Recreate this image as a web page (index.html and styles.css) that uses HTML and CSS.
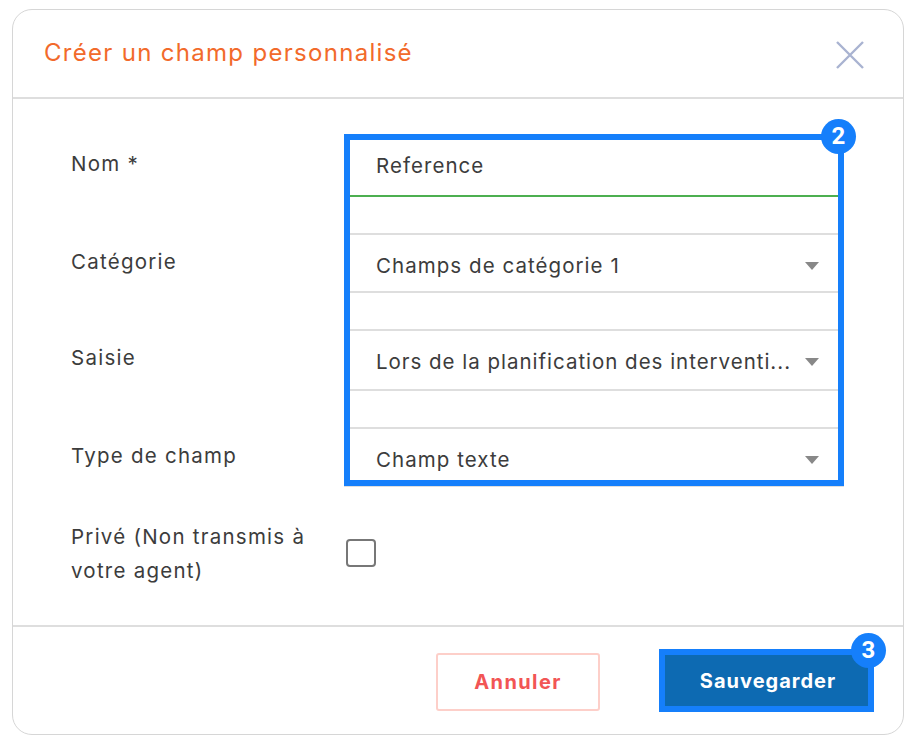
FILE: index.html
```html
<!DOCTYPE html>
<html lang="fr">
<head>
    <meta charset="UTF-8">
    <meta name="viewport" content="width=device-width, initial-scale=1.0">
    <title>Créer un champ personnalisé</title>
    <link rel="stylesheet" href="styles.css">
</head>
<body>
    <div class="modal">
        <div class="modal-header">
            <h1 class="modal-title">Créer un champ personnalisé</h1>
            <svg class="close-icon" viewBox="0 0 28 28" aria-label="Fermer">
                <path d="M1 1 L27 27 M27 1 L1 27"></path>
            </svg>
        </div>
        <div class="modal-body">
            <div class="form-top">
                <div class="labels">
                    <div class="label">Nom *</div>
                    <div class="label">Catégorie</div>
                    <div class="label">Saisie</div>
                    <div class="label">Type de champ</div>
                </div>
                <div class="fields">
                    <div class="field field-input">Reference</div>
                    <div class="field field-select">
                        <span>Champs de catégorie 1</span>
                        <span class="arrow"></span>
                    </div>
                    <div class="field field-select field-tall">
                        <span>Lors de la planification des interventi...</span>
                        <span class="arrow"></span>
                    </div>
                    <div class="field field-select field-last">
                        <span>Champ texte</span>
                        <span class="arrow"></span>
                    </div>
                    <div class="badge">2</div>
                </div>
            </div>
            <div class="private-row">
                <div class="label private-label">Privé (Non transmis à votre agent)</div>
                <input class="checkbox" type="checkbox">
            </div>
        </div>
        <div class="modal-footer">
            <button class="btn btn-cancel" type="button">Annuler</button>
            <button class="btn btn-save" type="button">
                Sauvegarder
                <span class="badge">3</span>
            </button>
        </div>
    </div>
</body>
</html>
```

FILE: styles.css
```css
body {
    margin: 0;
    background-color: #fff;
    font-family: Inter, "Open Sans", sans-serif;
    color: #3c3c3c;
}

.modal {
    width: 892px;
    height: 726px;
    margin: 9px 0 0 12px;
    box-sizing: border-box;
    display: flex;
    flex-direction: column;
    border: 1px solid #d6d6d6;
    border-radius: 20px;
}

.modal-header {
    height: 89px;
    box-sizing: border-box;
    display: flex;
    justify-content: space-between;
    align-items: flex-start;
    padding: 31px 39px 0 31px;
    border-bottom: 2px solid #dedede;
}

.modal-title {
    margin: 0;
    font-size: 24px;
    line-height: 24px;
    font-weight: 400;
    letter-spacing: 1.3px;
    color: #f26a2b;
}

.close-icon {
    width: 28px;
    height: 28px;
    flex-shrink: 0;
}

.close-icon path {
    stroke: #a9b3d1;
    stroke-width: 2.4;
    fill: none;
}

.modal-body {
    flex: 1;
    box-sizing: border-box;
    padding: 35px 0 0 58px;
    border-bottom: 2px solid #dedede;
}

.form-top {
    display: flex;
}

.labels {
    width: 273px;
    padding-top: 18px;
    display: grid;
    grid-template-rows: 98px 96px 98px auto;
    align-content: start;
}

.label {
    font-size: 20.5px;
    line-height: 24px;
    letter-spacing: 1.25px;
}

.fields {
    position: relative;
    width: 500px;
    height: 352px;
    box-sizing: border-box;
    border: 6px solid #157ffb;
    box-shadow: 0 1px 0 #dedede;
    display: flex;
    flex-direction: column;
    gap: 36px;
}

.field {
    box-sizing: border-box;
    padding-left: 26px;
    padding-right: 19px;
    font-size: 20.5px;
    line-height: 24px;
    letter-spacing: 1.05px;
    white-space: nowrap;
}

.field-input {
    height: 57px;
    padding-top: 14px;
    border-bottom: 2px solid #4caf50;
}

.field-select {
    display: flex;
    justify-content: space-between;
    height: 60px;
    padding-top: 19px;
    border-top: 2px solid #dedede;
    border-bottom: 2px solid #dedede;
}

.field-tall {
    height: 62px;
    letter-spacing: 0.98px;
}

.field-last {
    height: 53px;
    border-bottom: none;
}

.arrow {
    width: 0;
    height: 0;
    margin-top: 8px;
    border-left: 7.5px solid transparent;
    border-right: 7.5px solid transparent;
    border-top: 8px solid #888;
}

.badge {
    position: absolute;
    top: -21px;
    right: -18px;
    width: 35px;
    height: 35px;
    border-radius: 50%;
    background-color: #157ffb;
    color: #fff;
    font-family: Roboto, sans-serif;
    font-size: 24px;
    font-weight: 700;
    line-height: 35px;
    letter-spacing: 0;
    text-align: center;
}

.private-row {
    display: flex;
    align-items: center;
    margin-top: 34px;
}

.private-label {
    width: 275px;
    line-height: 34px;
}

.checkbox {
    appearance: none;
    width: 30px;
    height: 28px;
    margin: -2px 0 0;
    border: 2px solid #777;
    border-radius: 4px;
    background-color: #fff;
}

.modal-footer {
    height: 107px;
    box-sizing: border-box;
    display: flex;
    justify-content: flex-end;
    align-items: flex-start;
    gap: 59px;
    padding: 22px 29px 0 0;
}

.btn {
    box-sizing: border-box;
    font-family: inherit;
    font-size: 20px;
    font-weight: 700;
    letter-spacing: 1px;
    padding: 0;
}

.btn-cancel {
    width: 164px;
    height: 58px;
    margin-top: 4px;
    border: 2px solid #fdcfc9;
    border-radius: 3px;
    background-color: #fff;
    color: #f25555;
    letter-spacing: 1.4px;
}

.btn-save {
    position: relative;
    width: 215px;
    height: 63px;
    padding: 1px 0 0 3px;
    border: 6px solid #157ffb;
    background-color: #0d6ab2;
    color: #fff;
}

.btn-save .badge {
    top: -22px;
}
```
